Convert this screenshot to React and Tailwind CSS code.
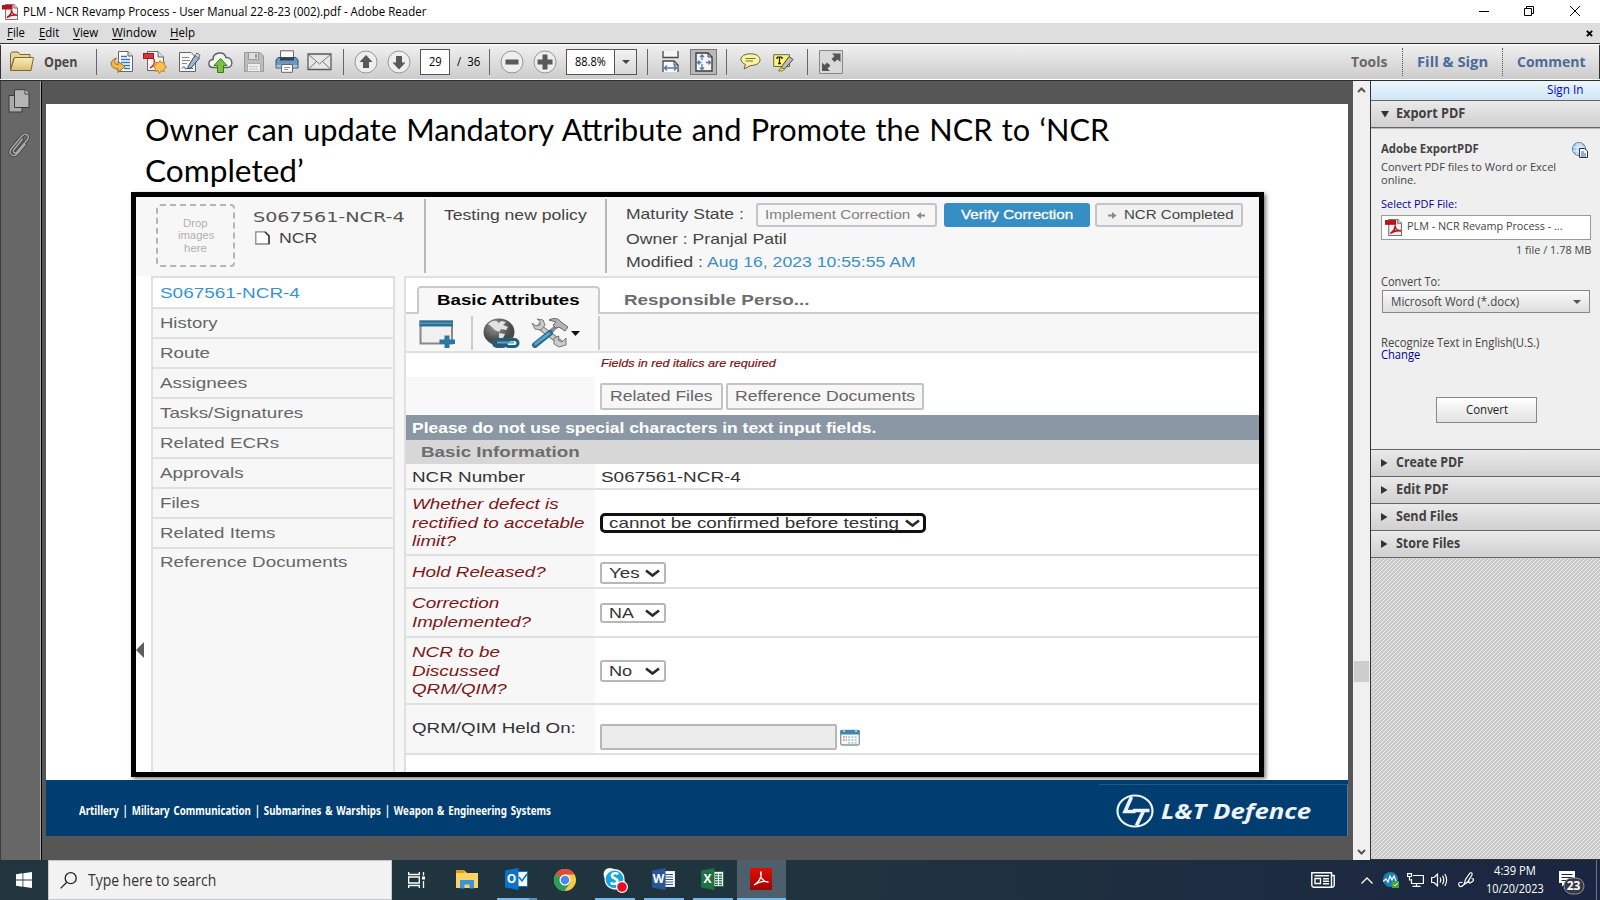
import React, { useLayoutEffect, useRef, useState } from "react";

/* One line of text, stretched or squeezed horizontally to a given width. */
function Fit({ w, className = "", children }) {
  const ref = useRef(null);
  const [scale, setScale] = useState(1);
  useLayoutEffect(() => {
    const measure = () => {
      if (ref.current) setScale(w / ref.current.offsetWidth);
    };
    measure();
    document.fonts.ready.then(measure);
  }, [w]);
  return (
    <span className={"block shrink-0 whitespace-nowrap " + className} style={{ width: w }}>
      <span ref={ref} className="inline-block origin-left" style={{ transform: `scaleX(${scale})` }}>
        {children}
      </span>
    </span>
  );
}

const UI = "font-['Open_Sans','Noto_Sans',sans-serif]";
const ARIAL = "font-['Liberation_Sans',Arial,sans-serif]";

function PdfIcon({ className }) {
  return (
    <svg className={className} viewBox="0 0 16 16">
      <path d="M3.500 .5H12L15.500 4V15.500H3.500Z" fill="#f2f0f0" stroke="#77706f" />
      <path d="M12 .5V4H15.500" fill="#ddd" stroke="#77706f" />
      <rect x="0" y="1" width="10.500" height="4.500" fill="#b3131c" />
      <path d="M5 13.500c3-1.500 5-5 4.500-7.500c0 3 2.500 5 5.500 5.200c-3-.6-7 .2-10 2.300z" fill="none" stroke="#b3131c" strokeWidth="1.500" />
    </svg>
  );
}

function Menu({ first, rest, w, className }) {
  return (
    <Fit w={w} className={className}>
      <span className="underline underline-offset-2">{first}</span>
      {rest}
    </Fit>
  );
}

function Sep({ className }) {
  return <div className={"h-[26px] w-px shrink-0 bg-[#666] " + className} />;
}

function TitleBar() {
  return (
    <div className="flex h-[23px] items-center bg-white text-[12px] text-black">
      <PdfIcon className="ml-[2px] h-4 w-4 shrink-0" />
      <Fit w={403} className="ml-[5px]">PLM - NCR Revamp Process - User Manual 22-8-23 (002).pdf - Adobe Reader</Fit>
      <svg className="ml-auto mr-[17px] mb-[2px] h-[14px] w-[106px]" viewBox="0 0 106 14" fill="none" stroke="#000">
        <path d="M2 7.500H12" />
        <path d="M47.500 5.500H54.500V12.500H47.500ZM49.500 5V3.500H56.500V10.500H55" transform="translate(0 -1)" />
        <path d="M93 2L103 12M103 2L93 12" />
      </svg>
    </div>
  );
}

function MenuBar() {
  return (
    <div className="flex h-5 items-center bg-[#dedede] text-[12px] text-black">
      <Menu first="F" rest="ile" w={18} className="ml-[7px]" />
      <Menu first="E" rest="dit" w={20} className="ml-[14px]" />
      <Menu first="V" rest="iew" w={25} className="ml-[14px]" />
      <Menu first="W" rest="indow" w={44} className="ml-[14px]" />
      <Menu first="H" rest="elp" w={25} className="ml-[14px]" />
      <svg className="ml-auto mr-[7px] h-[7px] w-[7px]" viewBox="0 0 8 8" stroke="#000" strokeWidth="2.300">
        <path d="M1 1L7 7M7 1L1 7" />
      </svg>
    </div>
  );
}

function RoundButton({ d, className }) {
  return (
    <svg className={"h-6 w-6 shrink-0 " + className} viewBox="0 0 24 24">
      <circle cx="12" cy="12" r="11" fill="#eee" stroke="#969696" />
      <path d={d} fill="#595959" />
    </svg>
  );
}

function Toolbar() {
  return (
    <div className="flex h-[38px] items-center border-y border-[#2d2d2d] bg-linear-to-b from-[#f1f1f1] to-[#cbcbcb] pb-px shadow-[inset_0_1px_#fff,inset_0_-1px_#fff,inset_1px_0_#333,inset_-1px_0_#333]">
      {/* open */}
      <svg className="ml-[9px] h-[21px] w-[26px] shrink-0" viewBox="0 0 26 21">
        <defs>
          <linearGradient id="fold" x1="0" y1="0" x2="0" y2="1">
            <stop offset="0" stopColor="#fbeeb9" />
            <stop offset="1" stopColor="#d9bd72" />
          </linearGradient>
        </defs>
        <path d="M1.500 19V2.500L3 1H9L11 3.500H21V7H5Z" fill="#ecd693" stroke="#79683c" />
        <path d="M1.500 19.500L5.500 6.500H24.500L22 19.500Z" fill="url(#fold)" stroke="#79683c" />
      </svg>
      <Fit w={33} className="ml-[9px] text-[14px] font-bold text-[#484848]">Open</Fit>
      <Sep className="ml-[19px]" />
      {/* convert */}
      <svg className="ml-[13px] h-6 w-[24px] shrink-0" viewBox="0 0 24 24">
        <path d="M8.500 1.500H18L22.500 6V21.500H8.500Z" fill="#fff" stroke="#666" />
        <path d="M18 1.500V6H22.500" fill="#ddd" stroke="#666" />
        <path d="M11 6.500H17M11 9.500H20M11 12.500H20M14 15.500H20M14 18.500H20" stroke="#3477bf" strokeWidth="1.400" />
        <path d="M6.500 8C-2 11 .5 19 8 19V22.500L15 16.500L8 11.500V14.500C4.500 14.500 3.500 11 6.500 8Z" fill="#f2b84a" stroke="#98631d" />
      </svg>
      {/* create */}
      <svg className="ml-[9px] h-6 w-6 shrink-0" viewBox="0 0 24 24">
        <path d="M4.500 1.500H15L20.500 7V20.500H4.500Z" fill="#f6f6f6" stroke="#666" />
        <path d="M15 1.500V7H20.500" fill="#ddd" stroke="#666" />
        <rect x=".5" y="3.500" width="10" height="5" fill="#d9343c" stroke="#a31820" />
        <path d="M7 18C11 16 12 12 11 9" fill="none" stroke="#c33" strokeWidth="1.600" />
        <path d="M17 10.500l1.600 2.500 2.900-.8-.2 3 2.400 1.800-2.600 1.600.1 3-2.900-.8L16.500 23.500l-1.500-2.700-3 .5.500-3-2.200-1.900 2.600-1.400-.1-3 2.900.9z" fill="#fbc153" stroke="#bd812a" />
      </svg>
      {/* sign */}
      <svg className="ml-[11px] h-6 w-[23px] shrink-0" viewBox="0 0 23 24">
        <path d="M1.500 2.500H13L17.500 7V21.500H1.500Z" fill="#f7f7f7" stroke="#666" />
        <path d="M4 7.500H11M4 10.500H12M4 13.500H9" stroke="#888" />
        <path d="M4 18.500c2-3 3-1 3 0s3-1 8 0" fill="none" stroke="#444" />
        <path d="M10 16.500L17 5.500L21.500 8L13.500 17.500L10 18.500Z" fill="#9cb9d3" stroke="#34475c" />
        <path d="M17.500 4.500L19 3L22 5.500L20 8" fill="#ddd" stroke="#555" />
      </svg>
      {/* cloud */}
      <svg className="ml-[7px] h-6 w-[25px] shrink-0" viewBox="0 0 25 24">
        <path d="M5 17.500C-.5 17.500-.5 10 5 9.500C5 2 16 .5 18 7.500C25 7 26 17.500 19.500 17.500Z" fill="#f4f4f4" stroke="#606060" strokeWidth="1.400" />
        <path d="M12.500 8.500L19 15.500H15.500V22.500H9.500V15.500H6Z" fill="#7cc344" stroke="#3c7a1d" />
      </svg>
      {/* save */}
      <svg className="ml-[10px] h-[22px] w-[22px] shrink-0" viewBox="0 0 22 22">
        <path d="M1.500 1.500H17L20.500 5V20.500H1.500Z" fill="#bdbdbd" stroke="#999" />
        <path d="M5.500 1.500H15.500V8.500H5.500Z" fill="#dedede" stroke="#999" />
        <path d="M12 3H14V7H12Z" fill="#999" />
        <path d="M4.500 12.500H17.500V20.500H4.500Z" fill="#ededed" stroke="#aaa" />
        <path d="M6.500 15.500H15.500M6.500 18H15.500" stroke="#bbb" strokeDasharray="2 1" />
      </svg>
      {/* print */}
      <svg className="ml-[10px] h-[23px] w-6 shrink-0" viewBox="0 0 24 23">
        <path d="M5.500 .8H18.500V8H5.500Z" fill="#fafafa" stroke="#666" />
        <path d="M3 7.500H21L23 10V18H1V10Z" fill="#6f98bf" stroke="#36536f" />
        <path d="M5 8H19V10.500H5Z" fill="#2f4355" />
        <path d="M1.500 15H22.500V17.500H1.500Z" fill="#aac5dc" />
        <path d="M6.500 14.500H17.500V22.300H6.500Z" fill="#fff" stroke="#666" />
        <path d="M9 17.500H15M9 19.500H13" stroke="#999" />
      </svg>
      {/* mail */}
      <svg className="ml-[8px] h-[18px] w-[25px] shrink-0" viewBox="0 0 25 18">
        <path d="M1 1H24V16.500H1Z" fill="#e8e8e8" stroke="#5c5c5c" strokeWidth="1.300" />
        <path d="M1.500 1.500L12.500 11L23.500 1.500M1.500 16L9.500 8.500M23.500 16L15.500 8.500" fill="none" stroke="#777" />
      </svg>
      <Sep className="ml-[11px]" />
      <RoundButton className="ml-[10px]" d="M12 5L18.500 12H15V18H9V12H5.500Z" />
      <RoundButton className="ml-[9px]" d="M12 19.500L18.500 12.500H15V6H9V12.500H5.500Z" />
      <div className="ml-[9px] flex h-[26px] w-[30px] shrink-0 items-center border border-[#555] bg-white pl-[8px] text-[12px] text-black">
        <Fit w={13}>29</Fit>
      </div>
      <Fit w={23} className="ml-[7px] text-[12px] text-black">/&nbsp; 36</Fit>
      <Sep className="ml-[9px]" />
      <RoundButton className="ml-[10px]" d="M5.500 9.500H18.500V14.500H5.500Z" />
      <RoundButton className="ml-[9px]" d="M9.500 4.500H14.500V9.500H19.500V14.500H14.500V19.500H9.500V14.500H4.500V9.500H9.500Z" />
      <div className="ml-[9px] flex h-[26px] w-[71px] shrink-0 items-center border border-[#555] bg-white pl-[8px] text-[12px] text-black">
        <Fit w={31}>88.8%</Fit>
        <div className="ml-[8px] flex h-6 flex-1 items-center justify-center border-l border-[#555] bg-linear-to-b from-[#f3f3f3] to-[#d8d8d8]">
          <svg className="h-1 w-2" viewBox="0 0 8 4"><path d="M0 0H8L4 4Z" fill="#444" /></svg>
        </div>
      </div>
      <Sep className="ml-[10px]" />
      {/* fit width */}
      <svg className="ml-[14px] h-[21px] w-[17px] shrink-0" viewBox="0 0 17 21">
        <path d="M1 0V6.500H16V0" fill="#f5f5f5" stroke="#484848" strokeWidth="1.300" />
        <path d="M1 21V10H12L16 14V21" fill="#f9f9f9" stroke="#484848" strokeWidth="1.300" />
        <path d="M12 10V14H16" fill="none" stroke="#484848" />
        <path d="M3 17H14M5 14.500L2.500 17L5 19.500M12 14.500L14.500 17L12 19.500" fill="none" stroke="#5578b0" strokeWidth="1.400" />
      </svg>
      {/* fit page */}
      <div className="ml-[11px] flex h-[26px] w-[27px] shrink-0 items-center justify-center border border-[#777] bg-[#b9b9b9]">
        <svg className="h-5 w-[18px]" viewBox="0 0 18 20">
          <path d="M1 1H13L17 5V19H1Z" fill="#f5f5f5" stroke="#3d3d3d" strokeWidth="1.400" />
          <path d="M13 1V5H17" fill="none" stroke="#3d3d3d" />
          <path d="M7 3.500V8M7 12V17M2.500 10.500H6.500M11 10.500H15.500M5 5L7 3L9 5M5 15.500L7 17.500L9 15.500M4.500 8.500L2.500 10.500L4.500 12.500M13.500 8.500L15.500 10.500L13.500 12.500" fill="none" stroke="#5578b0" strokeWidth="1.300" />
        </svg>
      </div>
      <Sep className="ml-[9px]" />
      {/* comment */}
      <svg className="ml-[13px] h-[17px] w-[21px] shrink-0" viewBox="0 0 21 17">
        <path d="M10.500 .8C16 .8 20 3.300 20 6.800S16 12.500 10.500 12.500L4 16L5.500 11.500C-2.500 8 .5 .8 10.500 .8Z" fill="#fbf59a" stroke="#5d5d50" />
        <path d="M5.500 5.500H15.500M5.500 8H13" stroke="#77734a" />
      </svg>
      {/* highlight */}
      <svg className="ml-[12px] mt-[2px] h-[18px] w-[21px] shrink-0" viewBox="0 0 21 18">
        <path d="M.7 .7H16.500V12.500H.7Z" fill="#fff46a" stroke="#666" />
        <path d="M4 3V5M4 3.200H9M9 3V5M6.500 3V9.500M5 9.500H8" fill="none" stroke="#222" strokeWidth="1.300" />
        <path d="M8 13.500L16 2.500L20 5.500L11.500 15Z" fill="#bcbcbc" stroke="#444" />
        <path d="M5.500 17L8 13.500L11.500 15L9.500 17Z" fill="#e8dc2c" stroke="#888030" />
      </svg>
      <Sep className="ml-[13px]" />
      {/* expand */}
      <svg className="ml-[11px] h-6 w-6 shrink-0" viewBox="0 0 24 24">
        <path d="M.5 .5H23.500V23.500H.5Z" fill="#d9d9d9" stroke="#888" />
        <path d="M13 3.500H21.500V12L18.500 9.500L15.500 12L12.500 9L15.500 6ZM3 12.500L5.500 15L8 12.500L11.500 15.500L8.500 18.500L11 21H3Z" fill="#555" />
      </svg>
      <Fit w={36} className="ml-auto text-[15px] font-bold text-[#6b6764]">Tools</Fit>
      <div className="ml-[15px] h-7 border-l border-dotted border-[#555]" />
      <Fit w={71} className="ml-[14px] text-[15px] font-bold text-[#4c6b9a]">Fill &amp; Sign</Fit>
      <div className="ml-[14px] h-7 border-l border-dotted border-[#555]" />
      <Fit w={69} className="ml-[14px] mr-[14px] text-[15px] font-bold text-[#4c6b9a]">Comment</Fit>
    </div>
  );
}

function LeftRail() {
  return (
    <div className="flex w-[42px] shrink-0 flex-col items-start border-r border-l border-r-black border-l-[#3c3c3c] bg-[#676767] pl-[7px] shadow-[inset_-1px_0_#aaa]">
      <svg className="mt-[8px] h-6 w-[22px]" viewBox="0 0 22 24">
        <path d="M1 6.500H14V23H1Z" fill="#aaa" stroke="#3a3a3a" />
        <path d="M6.500 .7H17L21 5V18.500H6.500Z" fill="#b5b5b5" stroke="#3a3a3a" />
        <path d="M17 .7V5H21" fill="#ddd" stroke="#3a3a3a" />
      </svg>
      <svg className="mt-[20px] h-6 w-[22px]" viewBox="0 0 22 24" fill="none" strokeLinecap="round">
        <path d="M14.500 6L6 16.500C4 19 7 21.500 9 19L19.500 6.500C22.500 2 17 -.5 14 3L3.500 15.500C-.5 21 5.500 25 9.500 20.500L17 11.500" stroke="#3e3e3e" strokeWidth="3" />
        <path d="M14.500 6L6 16.500C4 19 7 21.500 9 19L19.500 6.500C22.500 2 17 -.5 14 3L3.500 15.500C-.5 21 5.500 25 9.500 20.500L17 11.500" stroke="#aaa" strokeWidth="1.500" />
      </svg>
    </div>
  );
}

function SmallArrow({ flip }) {
  return (
    <svg className="h-[9px] w-[9px] shrink-0" viewBox="0 0 9 9">
      <path d={flip ? "M0 3.500H4V1L8.500 4.500L4 8V5.500H0Z" : "M9 3.500H5V1L.5 4.500L5 8V5.500H9Z"} fill="#8b8b8b" />
    </svg>
  );
}

function NcrHeader() {
  return (
    <div className="flex h-[79px] shrink-0 items-start bg-[#f7f7f7] pl-5 text-[15px] leading-[18px] text-[#444]">
      <div className="mt-[7px] flex h-[63px] w-[79px] shrink-0 flex-col items-center justify-center rounded-[4px] border-2 border-dashed border-[#b5b5b5] pt-[2px] text-[10px] leading-[12.500px] text-[#b0b0b0]">
        <Fit w={25}>Drop</Fit>
        <Fit w={36}>images</Fit>
        <Fit w={23}>here</Fit>
      </div>
      <div className="ml-[18px] mt-[11px] flex w-[151px] shrink-0 flex-col gap-[3px]">
        <Fit w={152} className="font-['DejaVu_Sans',sans-serif] text-[14px] text-[#555]">S067561-NCR-4</Fit>
        <div className="flex items-center">
          <svg className="ml-[2px] h-[14px] w-[15px] shrink-0" viewBox="0 0 15 14">
            <path d="M.8 .8H10L14 4.500V13H.8Z" fill="#fff" stroke="#888" strokeWidth="1.300" />
            <path d="M10 1L14 5V13" fill="none" stroke="#333" strokeWidth="1.500" />
          </svg>
          <Fit w={39} className="ml-[9px]">NCR</Fit>
        </div>
      </div>
      <div className="ml-[20px] mt-[2px] h-[74px] w-[2px] shrink-0 bg-[#b8b8b8]" />
      <Fit w={143} className="ml-[18px] mt-[9px]">Testing new policy</Fit>
      <div className="ml-[18px] mt-[2px] h-[74px] w-[2px] shrink-0 bg-[#b8b8b8]" />
      <div className="ml-[19px] mt-[6px] flex flex-col">
        <div className="flex h-6 items-center">
          <Fit w={118} className="pb-[2px]">Maturity State :</Fit>
          <div className="ml-[12px] flex h-6 w-[181px] items-center rounded-[3px] border-2 border-[#c4c4c8] bg-[#f7f7f7] pl-[7px] text-[13px] text-[#818181]">
            <Fit w={145}>Implement Correction</Fit>
            <div className="ml-[6px]"><SmallArrow /></div>
          </div>
          <div className="ml-[7px] flex h-6 w-[146px] items-center rounded-[3px] bg-[#368ec4] pl-[17px] text-[13px] text-white [-webkit-text-stroke:0.300px_white]">
            <Fit w={112}>Verify Correction</Fit>
          </div>
          <div className="ml-[5px] flex h-6 w-[148px] items-center rounded-[3px] border-2 border-[#c4c4c8] bg-[#f1f1f1] pl-[11px] text-[13px] text-[#444]">
            <SmallArrow flip />
            <Fit w={110} className="ml-[7px]">NCR Completed</Fit>
          </div>
        </div>
        <Fit w={161} className="mt-[3px]">Owner : Pranjal Patil</Fit>
        <div className="mt-[5px] flex">
          <Fit w={77}>Modified :</Fit>
          <Fit w={209} className="ml-[4px] text-[#3a8fc7]">Aug 16, 2023 10:55:55 AM</Fit>
        </div>
      </div>
    </div>
  );
}

const NAV = [
  ["S067561-NCR-4", 140], ["History", 58], ["Route", 50], ["Assignees", 87], ["Tasks/Signatures", 143],
  ["Related ECRs", 119], ["Approvals", 84], ["Files", 40], ["Related Items", 116], ["Reference Documents", 187],
];

function NcrNav() {
  return (
    <div className="flex w-[244px] shrink-0 flex-col border-x-2 border-t-2 border-[#dfdfdf] bg-[#f7f7f7] text-[15px] text-[#666]">
      {NAV.map(([label, w], i) => (
        <div
          key={label}
          className={
            "flex shrink-0 items-center pl-[7px] " +
            (i === 0 ? "h-[31px] bg-white pt-px text-[#3794d3] " : "h-[30px] ") +
            (i < NAV.length - 1 ? "border-b-2 border-[#dfdfdf]" : "pb-[3px]")
          }
        >
          <Fit w={w}>{label}</Fit>
        </div>
      ))}
    </div>
  );
}

function Chevron() {
  return (
    <svg className="h-2 w-[15px] shrink-0" viewBox="0 0 15 8" fill="none">
      <path d="M1 1.500L7.500 6.500L14 1.500" stroke="#2b2b2b" strokeWidth="2.700" />
    </svg>
  );
}

function Select({ label, w, className }) {
  return (
    <div className={"flex w-[66px] items-center justify-between rounded-[3px] border-2 border-[#b7b7b7] bg-white pl-[7px] pr-[4px] text-[15px] text-[#333] " + className}>
      <Fit w={w} className="leading-[18px]">{label}</Fit>
      <Chevron />
    </div>
  );
}

function Row({ className, label, labelClass, children }) {
  return (
    <div className={"flex shrink-0 border-b-2 border-[#e0e0e0] " + className}>
      <div className={"w-[189px] shrink-0 bg-[#f7f7f7] pl-[6px] leading-[18.500px] " + labelClass}>{label}</div>
      <div className="flex flex-1 items-start pl-[6px]">{children}</div>
    </div>
  );
}

function NcrForm() {
  return (
    <div className="flex min-w-0 flex-1 flex-col border-t-2 border-l-2 border-[#e0e0e0] bg-white text-[15px] text-[#333]">
      {/* tabs */}
      <div className="flex h-9 shrink-0 items-end border-b-2 border-[#cbcbcb] font-bold">
        <div className="-mb-[2px] ml-[11px] flex h-[28px] w-[183px] items-center rounded-t-[4px] border-x-2 border-t-2 border-[#cbcbcb] bg-[#f7f7f7] pb-[2px] pl-[18px] text-black">
          <Fit w={142}>Basic Attributes</Fit>
        </div>
        <Fit w={186} className="mb-[1px] ml-[24px] text-[#6c6c6c]">Responsible Perso...</Fit>
      </div>
      <div className="flex h-[39px] shrink-0 items-center border-b-2 border-[#e0e0e0] bg-[#f7f7f7]">
        <svg className="ml-[13px] mt-[2px] h-[28px] w-[37px] shrink-0" viewBox="0 0 37 28">
          <path d="M1.500 1.500H33V23.500H1.500Z" fill="#f0f0f0" stroke="#888" strokeWidth="2" />
          <path d="M.5 .5H34V6.500H.5Z" fill="#2a6f95" />
          <path d="M1 3.200H33.500" stroke="#6aaac9" />
          <path d="M25.500 15.500H30.500V19.500H36V24H30.500V28H25.500V24H20.500V19.500H25.500Z" fill="#2a789f" />
        </svg>
        <div className="ml-[15px] h-[34px] w-[2px] bg-[#cbcbcb]" />
        <svg className="ml-[10px] mt-px h-[30px] w-[37px] shrink-0" viewBox="0 0 37 30">
          <defs>
            <radialGradient id="orb" cx=".4" cy=".3"><stop offset="0" stopColor="#999" /><stop offset="1" stopColor="#4a4a4a" /></radialGradient>
          </defs>
          <ellipse cx="16" cy="14" rx="15.500" ry="13.500" fill="url(#orb)" />
          <path d="M5 6C8 3 11 2 14 3L15 5L19 3L23 4L20 7L25 9L23 12L18 11L16 14L12 12L9 9ZM16 15L22 16L20 20L16 21Z" fill="#e2e2e2" />
          <rect x="10.500" y="21.500" width="13" height="7" rx="3.500" fill="none" stroke="#1f5f80" strokeWidth="3" />
          <rect x="22" y="21.500" width="13" height="7" rx="3.500" fill="none" stroke="#1f5f80" strokeWidth="3" />
          <path d="M14 24.500H31" stroke="#60a4c4" strokeWidth="2" />
        </svg>
        <svg className="ml-[11px] mt-px h-[30px] w-[38px] shrink-0" viewBox="0 0 38 30">
          <path d="M6 7L30 25" stroke="#777" strokeWidth="5.500" />
          <path d="M6 7L30 25" stroke="#ccc" strokeWidth="3.600" />
          <path d="M1 5L5 8L9 7L9 3L6 1L12 2L14 7L10 12L4 11ZM35 20L31 24L27 22L28 18L23 20L23 26L28 29L35 27Z" fill="#ccc" stroke="#777" />
          <path d="M17 16L27 7" stroke="#888" strokeWidth="4" />
          <path d="M18 2C24 -1 28 1 30 4L37 9L34 13L28 9L25 10L22 7L25 4Z" fill="#b5b5b5" stroke="#666" />
          <path d="M4 27L19 15" stroke="#2a6b90" strokeWidth="6" strokeLinecap="round" />
          <path d="M4.500 26L18 15.500" stroke="#5ba5ca" strokeWidth="2.800" strokeLinecap="round" />
        </svg>
        <svg className="ml-[2px] mt-[2px] h-[5px] w-[9px]" viewBox="0 0 9 5"><path d="M0 0H9L4.500 5Z" fill="#111" /></svg>
        <div className="ml-[18px] h-[34px] w-[2px] bg-[#cbcbcb]" />
      </div>
      <div className="flex h-6 shrink-0 items-center pl-[195px] text-[11px] text-[#7a1212] italic [-webkit-text-stroke:0.200px_#7a1212]">
        <Fit w={175} className="pb-[3px]">Fields in red italics are required</Fit>
      </div>
      <div className="flex h-[38px] shrink-0">
        <div className="w-[189px] rounded-t-[3px] bg-[#f8f8f8]" />
        <div className="ml-[5px] mt-[6px] flex h-[27px] w-[123px] items-center rounded-[2px] border-2 border-[#c4c4c4] bg-[#f7f7f7] pl-[8px] text-[#666]">
          <Fit w={103}>Related Files</Fit>
        </div>
        <div className="ml-[3px] mt-[6px] flex h-[27px] w-[198px] items-center rounded-[2px] border-2 border-[#c4c4c4] bg-[#f7f7f7] pl-[7px] text-[#666]">
          <Fit w={180}>Refference Documents</Fit>
        </div>
      </div>
      <div className="flex h-[25px] shrink-0 items-center bg-[#8b97a5] pt-px pl-[6px] font-bold text-white">
        <Fit w={464}>Please do not use special characters in text input fields.</Fit>
      </div>
      <div className="flex h-6 shrink-0 items-center bg-[#d7d7d7] pl-[15px] font-bold text-[#6c6c6c]">
        <Fit w={159}>Basic Information</Fit>
      </div>
      <Row className="h-[26px]" labelClass="pt-[4px]" label={<Fit w={113}>NCR Number</Fit>}>
        <Fit w={140} className="mt-[4px] leading-[18px]">S067561-NCR-4</Fit>
      </Row>
      <Row
        className="h-[66px]"
        labelClass="pt-[5px] italic text-[#7e1616]"
        label={<><Fit w={147}>Whether defect is</Fit><Fit w={173}>rectified to accetable</Fit><Fit w={44}>limit?</Fit></>}
      >
        <div className="-ml-px mt-[23px] flex h-5 w-[326px] items-center rounded-[5px] border-[3px] border-[#111] bg-white pl-[6px]">
          <Fit w={290} className="leading-[16px]">cannot be confirmed before testing</Fit>
          <div className="ml-[6px] flex"><Chevron /></div>
        </div>
      </Row>
      <Row className="h-[33px]" labelClass="pt-[7px] italic text-[#7e1616]" label={<Fit w={134}>Hold Released?</Fit>}>
        <Select label="Yes" w={30} className="-ml-px mt-[6px] h-[22px]" />
      </Row>
      <Row
        className="h-[49px]"
        labelClass="pt-[5px] italic text-[#7e1616]"
        label={<><Fit w={87}>Correction</Fit><Fit w={119}>Implemented?</Fit></>}
      >
        <Select label="NA" w={25} className="-ml-px mt-[14px] h-[20px]" />
      </Row>
      <Row
        className="h-[67px]"
        labelClass="pt-[5px] italic text-[#7e1616]"
        label={<><Fit w={88}>NCR to be</Fit><Fit w={87}>Discussed</Fit><Fit w={95}>QRM/QIM?</Fit></>}
      >
        <Select label="No" w={23} className="-ml-px mt-[22px] h-[22px]" />
      </Row>
      <Row className="h-[50px]" labelClass="pt-[14px]" label={<Fit w={164}>QRM/QIM Held On:</Fit>}>
        <div className="-ml-px mt-[19px] h-[26px] w-[237px] rounded-[2px] border-2 border-[#b7b7b7] bg-[#ececec]" />
        <svg className="ml-[3px] mt-[24px] h-[17px] w-5" viewBox="0 0 20 17">
          <rect x=".7" y="1.500" width="18.600" height="14.500" rx="1.500" fill="#fafafa" stroke="#8d9498" strokeWidth="1.300" />
          <path d="M.5 1H19.500V5.500H.5Z" fill="#3b88a9" />
          <path d="M4 0V3M16 0V3" stroke="#ddd" strokeWidth="1.500" />
          <path d="M8 8H17M8 11H17M8 14H17" stroke="#b3d3e2" strokeWidth="2" strokeDasharray="2 1.300" />
          <path d="M3 8H7M3 11H7" stroke="#e3a0a3" strokeWidth="2" strokeDasharray="1.800 1" />
        </svg>
      </Row>
    </div>
  );
}

function Slide() {
  return (
    <div className="mt-[23px] ml-1 flex h-[732px] w-[1302px] shrink-0 flex-col bg-white">
      <div className="h-[88px] shrink-0 pl-[99px] pt-[5px] font-['Lato','Carlito',sans-serif] text-[30px] leading-[40.500px] text-black [word-spacing:1.500px]">
        <Fit w={964}>Owner can update Mandatory Attribute and Promote the NCR to ‘NCR</Fit>
        <Fit w={159}>Completed’</Fit>
      </div>
      <div className={"ml-[85px] flex h-[585px] w-[1133px] shrink-0 flex-col border-[5px] border-black bg-white shadow-[2px_2px_4px_rgba(0,0,0,0.5)] " + ARIAL}>
        <NcrHeader />
        <div className="flex min-h-0 flex-1">
          <div className="flex w-[15px] shrink-0 items-start">
            <svg className="mt-[366px] h-4 w-2" viewBox="0 0 8 16"><path d="M0 8L8 0V16Z" fill="#5d5d5d" /></svg>
          </div>
          <NcrNav />
          <div className="w-[9px] shrink-0 bg-[#f7f7f7]" />
          <NcrForm />
        </div>
      </div>
      <div className="mt-[3px] flex h-14 shrink-0 items-start bg-[#003e71] text-white">
        <Fit w={472} className="ml-[33px] mt-[22px] font-['Noto_Sans',sans-serif] text-[11.500px] leading-[18px] font-bold [word-spacing:1.500px]">
          Artillery | Military Communication | Submarines &amp; Warships | Weapon &amp; Engineering Systems
        </Fit>
        <div className="mt-1 ml-auto flex h-[52px] w-[249px] items-start border-t border-r border-t-[#1f5a8a] border-r-[#4a7ca5]">
          <svg className="ml-[17px] mt-[9px] h-[34px] w-[38px] shrink-0" viewBox="0 0 38 34" fill="none" stroke="#eef3f6">
            <ellipse cx="19" cy="17" rx="17.500" ry="15.500" strokeWidth="2.200" />
            <path d="M15.500 3L9 17.500H19.500" strokeWidth="3.600" />
            <path d="M17 16.500H33.500M27.500 17L20.500 31.500" strokeWidth="3.600" />
          </svg>
          <Fit w={150} className="ml-[7px] mt-[8px] text-[22px] leading-[34px] font-bold text-[#eef3f6] italic">L&amp;T Defence</Fit>
        </div>
      </div>
    </div>
  );
}

function ScrollBar() {
  return (
    <div className="flex w-[17px] shrink-0 flex-col items-center bg-[#f0f0f0]">
      <svg className="mt-[6px] h-[6px] w-[9px]" viewBox="0 0 9 6" fill="none"><path d="M1 5L4.500 1.500L8 5" stroke="#555" strokeWidth="2" /></svg>
      <div className="mt-[568px] h-[21px] w-[15px] bg-[#cdcdcd]" />
      <svg className="mt-auto mb-[5px] h-[6px] w-[9px]" viewBox="0 0 9 6" fill="none"><path d="M1 1L4.500 4.500L8 1" stroke="#555" strokeWidth="2" /></svg>
    </div>
  );
}

function PanelHead({ label, w, open }) {
  return (
    <div className="flex h-[27px] shrink-0 items-center border-b border-[#666] bg-linear-to-b from-[#eaeaea] to-[#d0d0d0] pl-[10px] text-[14px] font-bold text-[#404040]">
      <svg className="h-2 w-2" viewBox="0 0 8 8"><path d={open ? "M0 1H8L4 7.500Z" : "M0 0L6.500 4L0 8Z"} fill="#333" /></svg>
      <Fit w={w} className="ml-[7px] pb-[2px]">{label}</Fit>
    </div>
  );
}

function SidePanel() {
  return (
    <div className="flex w-[230px] shrink-0 flex-col border-l border-[#333] bg-[#efefef] text-[12px] leading-[14px] text-[#444]">
      <div className="flex h-5 shrink-0 items-center justify-end border-b border-[#666] bg-linear-to-b from-[#eef7fe] to-[#cfe6f8] pr-[17px] text-[#0000e0]">
        <Fit w={36} className="pb-px">Sign In</Fit>
      </div>
      <PanelHead label="Export PDF" w={69} open />
      <div className="flex h-[321px] shrink-0 flex-col border-t border-[#bbb] pl-[10px]">
        <div className="mt-[12px] flex items-start">
          <Fit w={98} className="mt-px text-[12.500px] font-bold">Adobe ExportPDF</Fit>
          <svg className="ml-[93px] mt-px h-4 w-4" viewBox="0 0 16 16">
            <circle cx="7" cy="7" r="6.500" fill="#a9cdec" stroke="#3e78b0" />
            <path d="M1 5H13M1 9H13M5 1V13M9 1V13M7 .5V13" stroke="#fff" strokeWidth=".7" />
            <path d="M7.500 6.500H12.500L15.500 9V15.500H7.500Z" fill="#fff" stroke="#333" />
            <path d="M9 10H12M9 12H14M9 14H14" stroke="#1d65b5" />
          </svg>
        </div>
        <Fit w={175} className="mt-[2px] text-[11.500px] leading-[13px]">Convert PDF files to Word or Excel</Fit>
        <Fit w={35} className="text-[11.500px] leading-[13px]">online.</Fit>
        <Fit w={76} className="mt-[11px] text-[11.500px] leading-[13px] text-[#00009c]">Select PDF File:</Fit>
        <div className="mt-[5px] flex h-[25px] w-[210px] items-center border border-[#999] bg-white pl-[3px] text-[11.500px]">
          <PdfIcon className="h-[17px] w-[17px]" />
          <Fit w={156} className="ml-[5px] pb-1">PLM - NCR Revamp Process - ...</Fit>
        </div>
        <Fit w={75} className="mt-[3px] ml-[135px] text-[11.500px]">1 file / 1.78 MB</Fit>
        <Fit w={59} className="mt-[18px]">Convert To:</Fit>
        <div className="mt-px ml-px flex h-[23px] w-[208px] items-center border border-[#888] bg-linear-to-b from-[#fafafa] to-[#dedede] pl-[8px]">
          <Fit w={128}>Microsoft Word (*.docx)</Fit>
          <svg className="ml-auto mr-[8px] h-1 w-2" viewBox="0 0 8 4"><path d="M0 0H8L4 4Z" fill="#555" /></svg>
        </div>
        <Fit w={158} className="mt-[24px] leading-[11.500px]">Recognize Text in English(U.S.)</Fit>
        <Fit w={39} className="leading-[11.500px] text-[#00009c]">Change</Fit>
        <div className="mt-[37px] ml-[55px] flex h-[26px] w-[101px] items-center border border-[#888] bg-linear-to-b from-white to-[#e2e2e2] pl-[29px] text-[#222]">
          <Fit w={42}>Convert</Fit>
        </div>
      </div>
      <div className="h-px shrink-0 bg-[#666]" />
      <PanelHead label="Create PDF" w={68} />
      <PanelHead label="Edit PDF" w={53} />
      <PanelHead label="Send Files" w={62} />
      <PanelHead label="Store Files" w={64} />
      <div className="flex-1 border-b border-[#333] bg-[repeating-linear-gradient(135deg,#c9c9c9_0,#c9c9c9_2px,#ededed_2px,#ededed_2.828px)]" />
    </div>
  );
}

function Task({ active, line = true, more, children }) {
  return (
    <div className={"flex h-10 w-[49px] shrink-0 flex-col items-center " + (active ? "bg-[#4d5f6a]" : "")}>
      <div className="-ml-px flex h-[38px] items-center">{children}</div>
      {line && (
        <div className={"flex h-[2px] " + (active ? "w-[49px]" : "w-10")}>
          <div className="flex-1 bg-[#76b9ed]" />
          {more && <div className="w-2 bg-[#5b8fb8]" />}
        </div>
      )}
    </div>
  );
}

function OfficeIcon({ letter, color, mid, children }) {
  return (
    <svg className="h-[22px] w-[23px]" viewBox="0 0 23 22">
      <rect x="11" y="3.500" width="11.500" height="15" fill="#fff" stroke={mid} />
      {children}
      <path d="M0 2.500L13.500 0V22L0 19.500Z" fill={color} />
      <text x="6.600" y="15.200" textAnchor="middle" fontSize="12" fontWeight="bold" fill="#fff" fontFamily="Open Sans">{letter}</text>
    </svg>
  );
}

function Taskbar() {
  return (
    <div className="flex h-10 shrink-0 items-center bg-linear-to-r from-[#21353f] via-[#20343f] via-50% to-[#1b2541] text-white">
      <svg className="ml-4 h-4 w-4 shrink-0" viewBox="0 0 16 16" fill="#fff">
        <path d="M0 2.200L6.500 1.300V7.600H0ZM7.300 1.200L16 0V7.600H7.300ZM0 8.400H6.500V14.700L0 13.800ZM7.300 8.400H16V16L7.300 14.800Z" />
      </svg>
      <div className="ml-4 flex h-10 w-[344px] shrink-0 items-center border border-[#c5c8ca] bg-[#f2f2f2] text-[16px] text-[#333]">
        <svg className="ml-[11px] h-[17px] w-[17px]" viewBox="0 0 17 17" fill="none" stroke="#222" strokeWidth="1.300">
          <circle cx="10.700" cy="6.200" r="5.500" /><path d="M6.800 10.200L.6 16.400" />
        </svg>
        <Fit w={128} className="ml-[11px]">Type here to search</Fit>
      </div>
      <svg className="ml-4 h-4 w-[17px] shrink-0" viewBox="0 0 17 16" fill="none" stroke="#fff" strokeWidth="1.300">
        <path d="M.7 0V2.500H11.300V0M.7 16V13.500H11.300V16M.7 5H11.300V11H.7ZM15.500 0V3.500M15.500 9V16" />
        <path d="M14 4.500H17V7.500H14Z" fill="#fff" stroke="none" />
      </svg>
      <div className="ml-[18px] flex">
        <Task line={false}>
          <svg className="h-[19px] w-[22px]" viewBox="0 0 22 19">
            <path d="M0 1H9L11 3H22V18H0Z" fill="#fbd367" />
            <path d="M0 0H8.500V3H0Z" fill="#dc9c1a" />
            <path d="M4 18.500V10H18V18.500H13.500V14.500H8.500V18.500Z" fill="#3a94dc" />
          </svg>
        </Task>
        <Task more>
          <OfficeIcon letter="O" color="#0a72c8" mid="#0a72c8">
            <path d="M12 6.500H22V16.500H12Z" fill="#fff" /><path d="M14 9L17 13L22 6" fill="none" stroke="#0a72c8" strokeWidth="1.500" />
          </OfficeIcon>
        </Task>
        <Task line={false}>
          <svg className="mt-[2px] h-[22px] w-[22px]" viewBox="0 0 22 22">
            <circle cx="11" cy="11" r="11" fill="#fbca3e" />
            <path d="M11 11L1.500 5.500A11 11 0 0 1 20.500 5.500H11Z" fill="#df4b3b" />
            <path d="M11 11L1.500 5.500A11 11 0 0 0 10.500 22L16 14Z" fill="#25a05b" />
            <circle cx="11" cy="11" r="5.500" fill="#fff" />
            <circle cx="11" cy="11" r="4.300" fill="#4a86ee" />
          </svg>
        </Task>
        <Task>
          <svg className="ml-[2px] mt-[3px] h-[25px] w-[25px]" viewBox="0 0 25 25">
            <path d="M7 0C9 0 10 1 11 1C18 1 22 6 21.500 12C23 17 19 23 14 21.500C6 22 1 17 1.500 10C-1 5 2 0 7 0Z" fill="#f3f8fb" />
            <circle cx="11.500" cy="11.300" r="8.800" fill="#17a3dd" />
            <text x="11.500" y="17.300" textAnchor="middle" fontSize="17" fontWeight="bold" fill="#fff" fontFamily="Open Sans">S</text>
            <circle cx="19" cy="19" r="5.400" fill="#e60f25" stroke="#fff" strokeWidth="1.200" />
          </svg>
        </Task>
        <Task>
          <OfficeIcon letter="W" color="#2a5699" mid="#e8e8e8"><path d="M13 6.500H21M13 9H21M13 11.500H21M13 14H21M13 16.500H21" stroke="#2a5699" /></OfficeIcon>
        </Task>
        <Task>
          <OfficeIcon letter="X" color="#1f7244" mid="#1f7244"><path d="M14 6.500H21M14 9H21M14 11.500H21M14 14H21M14 16.500H21" stroke="#1f7244" strokeWidth="1.400" strokeDasharray="3 1" /></OfficeIcon>
        </Task>
        <Task active>
          <svg className="h-[22px] w-[22px]" viewBox="0 0 22 22">
            <defs><linearGradient id="acro" x1="0" y1="0" x2="0" y2="1"><stop offset="0" stopColor="#e40c05" /><stop offset="1" stopColor="#9d0500" /></linearGradient></defs>
            <rect width="22" height="22" rx="1" fill="url(#acro)" />
            <path d="M4 17C9 14.500 12 9 11 3.500C9.500 9 13 14 18.500 14.200C14 12.500 8 14 4 17Z" fill="none" stroke="#fff" strokeWidth="1.300" />
          </svg>
        </Task>
      </div>
      <svg className="ml-auto h-4 w-6 shrink-0" viewBox="0 0 24 16" fill="none" stroke="#fff" strokeWidth="1.400">
        <path d="M.8 .8H20.500V15.200H2.500Q.8 15 .8 13ZM20.500 3.500H23.200V13.500Q23 15.200 21 15.200H18" />
        <path d="M4 6.500H9.500V11.500H4ZM3.500 3.800H18M12 6.800H18M12 9.300H18M12 11.800H18" />
      </svg>
      <svg className="ml-[26px] h-[7px] w-3 shrink-0" viewBox="0 0 12 7" fill="none" stroke="#fff" strokeWidth="1.300"><path d="M.5 6.500L6 1L11.500 6.500" /></svg>
      <svg className="ml-[10px] h-4 w-4 shrink-0" viewBox="0 0 16 16">
        <circle cx="7.500" cy="7.500" r="7.500" fill="#1b7fb6" />
        <path d="M0 9.500L3 7L5 10L7 4L9 8L11 4L13 9" fill="none" stroke="#fff" strokeWidth="1.200" />
        <path d="M9 9H16V16H9Z" fill="#3fa535" /><path d="M10.500 12.500L12 14L14.800 10.800" fill="none" stroke="#fff" />
      </svg>
      <svg className="ml-[8px] h-[14px] w-[17px] shrink-0" viewBox="0 0 17 14" fill="none" stroke="#fff" strokeWidth="1.200">
        <path d="M6 2.500H16.400V10.500H4.500V6M9.500 10.500V13.200M5.500 13.400H13.500M.6 .6H4.500V3.500H.6ZM2.500 3.500V7H4.500" />
      </svg>
      <svg className="ml-[7px] h-[14px] w-[17px] shrink-0" viewBox="0 0 17 14" fill="none" stroke="#fff" strokeWidth="1.200">
        <path d="M.6 4.500H3L6.500 1.200V12.800L3 9.500H.6ZM9 4.500Q10.500 7 9 9.500M11.500 2.800Q14 7 11.500 11.200M13.800 1Q17.500 7 13.800 13" />
      </svg>
      <svg className="ml-[10px] h-4 w-4 shrink-0" viewBox="0 0 16 16" fill="none" stroke="#fff" strokeWidth="1.200">
        <path d="M6 12.500L7.500 7.500L12 1Q14.500 0 14 3L9.500 10ZM4.500 10.500Q0 9.500 .8 13Q2 16.500 6 12.500L11 9.500Q11 13 15.500 8.500Q16 6.500 13.500 6.500" />
      </svg>
      <div className="ml-[12px] flex w-[58px] shrink-0 flex-col items-center text-[12px] leading-[18px]">
        <Fit w={42}>4:39 PM</Fit>
        <Fit w={58}>10/20/2023</Fit>
      </div>
      <svg className="ml-[14px] mt-[5px] h-[25px] w-[28px] shrink-0" viewBox="0 0 28 25">
        <path d="M1 1H17V13H8L4 16.500V13H1Z" fill="#fff" />
        <path d="M3.500 4.500H14.500M3.500 7.500H14.500M3.500 10.500H9" stroke="#1c2740" />
        <rect x="6" y="8" width="20" height="16" rx="8" fill="#343943" stroke="#8a8f99" />
        <text x="15.500" y="20.400" textAnchor="middle" fontSize="12" fontWeight="700" fill="#fff" fontFamily="Open Sans">23</text>
      </svg>
      <div className="ml-[10px] mr-[3px] h-10 w-px bg-[#6d7486]" />
    </div>
  );
}

export default function App() {
  return (
    <div className={"flex h-[900px] w-[1600px] flex-col overflow-hidden " + UI}>
      <TitleBar />
      <MenuBar />
      <Toolbar />
      <div className="flex min-h-0 flex-1">
        <LeftRail />
        <div className="flex flex-1 items-start bg-[#565656]">
          <Slide />
        </div>
        <ScrollBar />
        <SidePanel />
      </div>
      <Taskbar />
    </div>
  );
}
